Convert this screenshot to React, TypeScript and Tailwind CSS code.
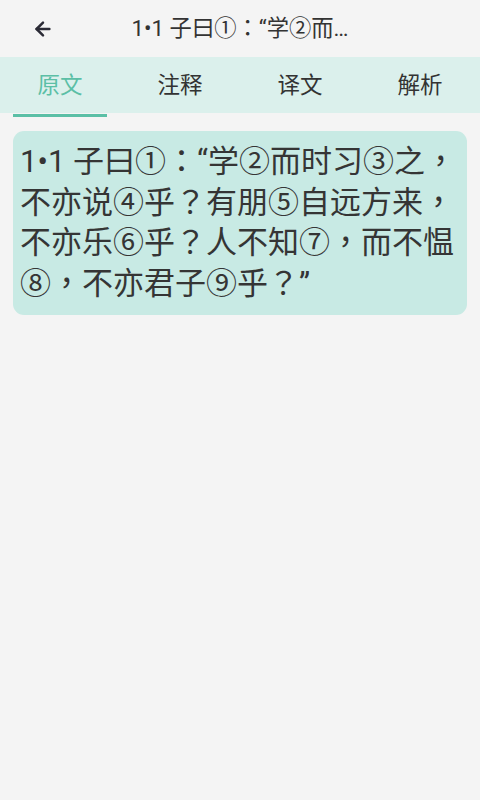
import { ArrowLeft } from "lucide-react";
import { useState } from "react";

const tabs = ["原文", "注释", "译文", "解析"];

export default function App() {
  const [active, setActive] = useState(0);

  return (
    <div
      className="w-[480px] h-[800px] bg-[#f4f4f4] text-[#333333] overflow-hidden"
      style={{ fontFamily: 'Roboto, "Noto Sans CJK TC", "Noto Sans CJK SC", sans-serif' }}
    >
      {/* Header */}
      <div className="relative h-[57px] flex items-center justify-center">
        <button className="absolute left-[28px] top-[14px] p-1 text-[#2b2b36]">
          <ArrowLeft size={22} strokeWidth={2.7} />
        </button>
        <div className="whitespace-nowrap text-[22.3px] leading-none text-[#333333]">
          1•1 子曰①：“学②而…
        </div>
      </div>

      {/* Tabs */}
      <div className="grid grid-cols-4 h-[56px] bg-[#dbf0ec]">
        {tabs.map((t, i) => (
          <button
            key={t}
            onClick={() => setActive(i)}
            className={
              "relative flex items-center justify-center pt-[2px] text-[22.5px] " +
              (i === active ? "text-[#5bbfa6]" : "text-[#333333]")
            }
          >
            {t}
            {i === active && (
              <span className="absolute left-[13px] right-[13px] top-full mt-[1px] h-[3px] bg-[#5bbfa6]" />
            )}
          </button>
        ))}
      </div>

      {/* Content */}
      <div className="px-[13px] pt-[18px]">
        <div className="bg-[#c8eae4] rounded-[11px] px-[7px] pt-[11px] pb-[11px]">
          <p className="text-[31px] leading-[40.5px] text-[#353535]">
            1•1 子曰①：“学②而时习③之，不亦说④乎？有朋⑤自远方来，不亦乐⑥乎？人不知⑦，而不愠⑧，不亦君子⑨乎？”
          </p>
        </div>
      </div>
    </div>
  );
}
